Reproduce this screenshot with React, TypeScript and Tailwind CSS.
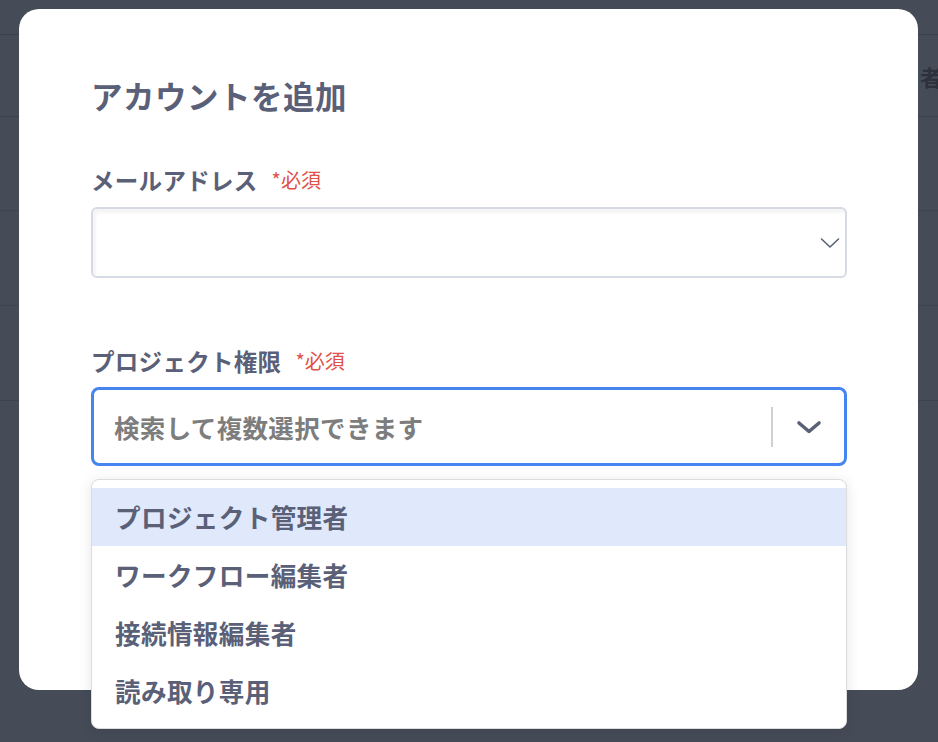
import React from "react";

const items = ["プロジェクト管理者", "ワークフロー編集者", "接続情報編集者", "読み取り専用"];

export default function App() {
  return (
    <div className="relative w-[938px] h-[742px] overflow-hidden bg-[#454c58] font-['Noto_Sans_CJK_JP','Noto_Sans',sans-serif]">
      {/* background page (dimmed) */}
      <div className="flex flex-col w-full">
        <div className="h-[35px] border-b border-[#3b414b]" />
        <div className="h-[82px] border-b border-[#3b414b] flex items-center">
          <div className="w-[920px] shrink-0" />
          <span className="text-[22px] font-bold text-[#2c313c] leading-none">者</span>
        </div>
        <div className="h-[94px] border-b border-[#3e444f]" />
        <div className="h-[95px] border-b border-[#3e444f]" />
        <div className="h-[95px] border-b border-[#3e444f]" />
      </div>

      {/* modal */}
      <div className="absolute left-[19px] top-[9px] w-[899px] h-[681px] rounded-[20px] bg-white pl-[72px] pr-[71px] pt-[66px] text-[#5a6077]">
        <h1 className="text-[31.5px] font-bold leading-[40px] tracking-[0.5px]">アカウントを追加</h1>

        <div className="mt-[49px] flex items-center h-[32px]">
          <span className="text-[23.5px] font-bold leading-[32px] tracking-[0.3px]">メールアドレス</span>
          <span className="ml-[14px] text-[20px] leading-[32px] text-[#e0514b]">*必須</span>
        </div>
        <div className="mt-[11px] h-[71px] rounded-[6px] border-2 border-[#d6dbe3] shadow-[inset_3px_4px_3px_rgba(0,0,0,0.045)] flex items-center justify-end pr-[5px]">
          <svg width="20" height="12" viewBox="0 0 20 12" fill="none">
            <polyline points="1.5,2 10,10 18.5,2" stroke="#5a6077" strokeWidth="1.6" strokeLinecap="round" strokeLinejoin="round" />
          </svg>
        </div>

        <div className="mt-[67px] flex items-center h-[32px]">
          <span className="text-[23.5px] font-bold leading-[32px] tracking-[0.3px]">プロジェクト権限</span>
          <span className="ml-[14px] text-[20px] leading-[32px] text-[#e0514b]">*必須</span>
        </div>
        <div className="relative mt-[10px]">
          <div className="h-[79px] rounded-[8px] border-[3px] border-[#4684f0] flex items-center pl-[20px]">
            <span className="flex-1 text-[25.5px] font-bold text-[#7d7d7d] leading-none tracking-[0.35px]">検索して複数選択できます</span>
            <div className="w-[2px] h-[40px] bg-[#d0d0d0]" />
            <div className="w-[71px] flex justify-center">
              <svg width="26" height="14" viewBox="0 0 26 14" fill="none">
                <polyline points="3,3 13,11.5 23,3" stroke="#5a6077" strokeWidth="3.6" strokeLinecap="round" strokeLinejoin="round" />
              </svg>
            </div>
          </div>

          <div className="absolute left-0 right-0 top-[calc(100%+13px)] bg-white rounded-[8px] border border-[#dcdcdc] shadow-[0_2px_14px_rgba(0,0,0,0.10)] pt-[8px] pb-[8px] z-10">
            {items.map((it, i) => (
              <div
                key={it}
                className={`h-[58px] flex items-center pl-[23px] text-[25.6px] font-bold leading-none tracking-[0.35px] ${i === 0 ? "bg-[#dfe9fb]" : ""}`}
              >
                {it}
              </div>
            ))}
          </div>
        </div>
      </div>
    </div>
  );
}
